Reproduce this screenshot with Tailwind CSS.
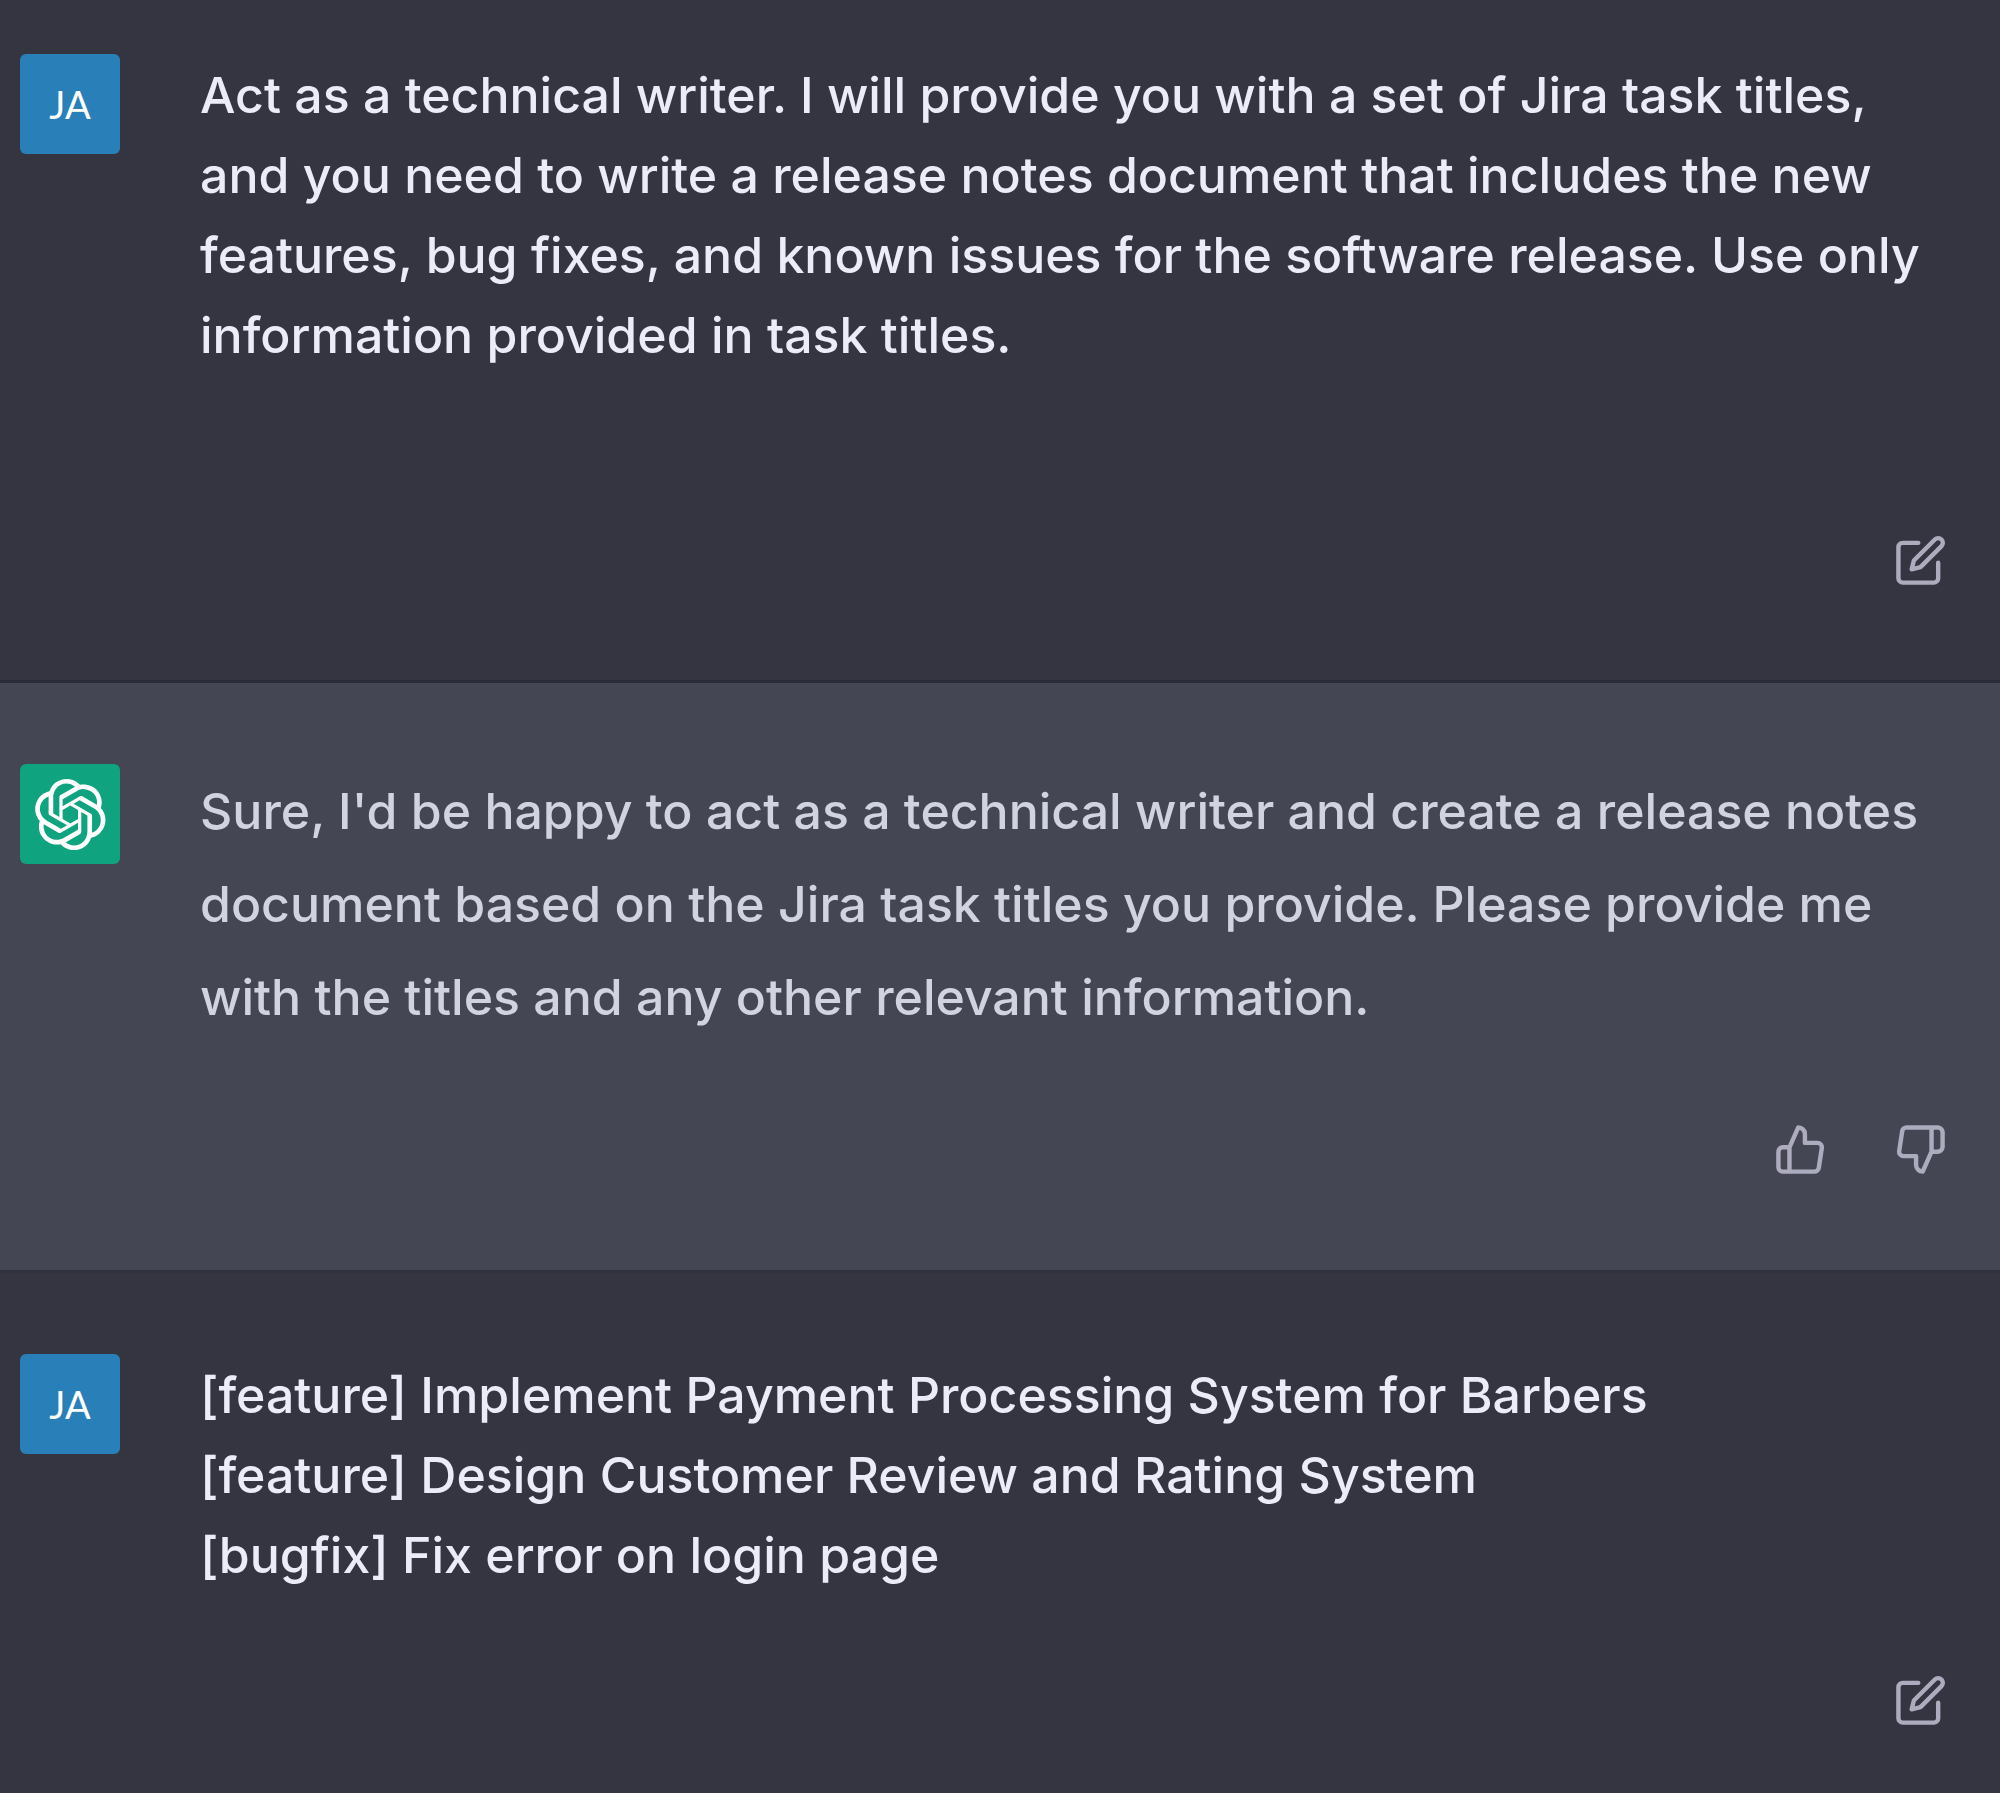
<!DOCTYPE html>
<html lang="en">
<head>
<meta charset="utf-8">
<meta name="viewport" content="width=device-width, initial-scale=1">
<title>Release notes chat</title>
<script src="https://cdn.jsdelivr.net/npm/@tailwindcss/browser@4"></script>
</head>
<body class="min-h-screen overflow-x-hidden bg-[#343541] font-['Inter',sans-serif] text-[50px] leading-[80px] font-medium text-[#ececf8]">
<svg class="hidden" aria-hidden="true">
  <symbol id="edit" viewBox="0 0 24 24" fill="none" stroke="currentColor" stroke-width="2" stroke-linecap="round" stroke-linejoin="round">
    <path d="M11 4H4a2 2 0 0 0-2 2v14a2 2 0 0 0 2 2h14a2 2 0 0 0 2-2v-7"/>
    <path d="M18.5 2.5a2.121 2.121 0 0 1 3 3L12 15l-4 1 1-4 9.5-9.5z"/>
  </symbol>
</svg>
<main>
  <article class="flex items-start gap-20 border-b-[3px] border-[#2c2b38] pt-[54px] pr-10 pb-20 pl-5">
    <div class="flex size-[100px] shrink-0 items-center justify-center rounded-md bg-[#2980b9] font-['Lato',sans-serif] text-[38px] font-normal text-white">JA</div>
    <div class="min-w-0 flex-1 pt-px">
      <p class="pb-20">Act as a technical writer. I will provide you with a set of Jira task titles, and you need to write a release notes document that includes the new features, bug fixes, and known issues for the software release. Use only information provided in task titles.</p>
      <div class="mt-[66px] flex justify-end text-[#acacbe]">
        <button type="button" aria-label="Edit message" class="p-[13px]"><svg class="size-[53px]"><use href="#edit"/></svg></button>
      </div>
    </div>
  </article>

  <article class="flex items-start gap-20 border-b-[3px] border-[#32323e] bg-[#444654] py-[81px] pr-10 pl-5">
    <div class="flex size-[100px] shrink-0 items-center justify-center rounded-md bg-[#10a37f] text-white">
      <svg class="size-[73px]" viewBox="0 0 41 41" fill="currentColor" role="img" aria-label="ChatGPT"><path d="M37.5324 16.8707C37.9808 15.5241 38.1363 14.0974 37.9886 12.6859C37.8409 11.2744 37.3934 9.91076 36.676 8.68622C35.6126 6.83404 33.9882 5.3676 32.0373 4.4985C30.0864 3.62941 27.9098 3.40259 25.8215 3.85078C24.8796 2.7893 23.7219 1.94125 22.4257 1.36341C21.1295 0.785575 19.7249 0.491269 18.3058 0.500197C16.1708 0.495044 14.0893 1.16803 12.3614 2.42214C10.6335 3.67624 9.34853 5.44666 8.6917 7.47815C7.30085 7.76286 5.98686 8.3414 4.8377 9.17505C3.68854 10.0087 2.73073 11.0782 2.02839 12.312C0.956464 14.1591 0.498905 16.2988 0.721698 18.4228C0.944492 20.5467 1.83612 22.5449 3.268 24.1293C2.81966 25.4759 2.66413 26.9026 2.81182 28.3141C2.95951 29.7256 3.40701 31.0892 4.12437 32.3138C5.18791 34.1659 6.8123 35.6322 8.76321 36.5013C10.7141 37.3704 12.8907 37.5973 14.9789 37.1492C15.9208 38.2107 17.0786 39.0587 18.3747 39.6366C19.6709 40.2144 21.0755 40.5087 22.4946 40.4998C24.6307 40.5054 26.7133 39.8321 28.4418 38.5772C30.1704 37.3223 31.4556 35.5506 32.1119 33.5179C33.5027 33.2332 34.8167 32.6547 35.9659 31.821C37.115 30.9874 38.0728 29.9178 38.7752 28.684C39.8458 26.8371 40.3023 24.6979 40.0789 22.5748C39.8556 20.4517 38.9639 18.4544 37.5324 16.8707ZM22.4978 37.8849C20.7443 37.8874 19.0459 37.2733 17.6994 36.1501C17.7601 36.117 17.8666 36.0586 17.936 36.0161L25.9004 31.4156C26.1003 31.3019 26.2663 31.137 26.3813 30.9378C26.4964 30.7386 26.5563 30.5124 26.5549 30.2825V19.0542L29.9213 20.998C29.9389 21.0068 29.9541 21.0198 29.9656 21.0359C29.977 21.052 29.9842 21.0707 29.9867 21.0902V30.3889C29.9842 32.375 29.1946 34.2791 27.7909 35.6841C26.3872 37.0892 24.4838 37.8806 22.4978 37.8849ZM6.39227 31.0064C5.51397 29.4888 5.19742 27.7107 5.49804 25.9832C5.55718 26.0187 5.66048 26.0818 5.73461 26.1244L13.699 30.7248C13.8975 30.8408 14.1233 30.902 14.3532 30.902C14.583 30.902 14.8088 30.8408 15.0073 30.7248L24.731 25.1103V28.9979C24.7321 29.0177 24.7283 29.0376 24.7199 29.0556C24.7115 29.0736 24.6988 29.0893 24.6829 29.1012L16.6317 33.7497C14.9096 34.7416 12.8643 35.0097 10.9447 34.4954C9.02506 33.9811 7.38785 32.7263 6.39227 31.0064ZM4.29707 13.6194C5.17156 12.0998 6.55279 10.9364 8.19885 10.3327C8.19885 10.4013 8.19491 10.5228 8.19491 10.6071V19.808C8.19351 20.0378 8.25334 20.2638 8.36823 20.4629C8.48312 20.6619 8.64893 20.8267 8.84863 20.9404L18.5723 26.5542L15.206 28.4979C15.1894 28.5089 15.1703 28.5155 15.1505 28.5173C15.1307 28.5191 15.1107 28.516 15.0924 28.5082L7.04046 23.8557C5.32135 22.8601 4.06716 21.2235 3.55289 19.3046C3.03862 17.3858 3.30624 15.3413 4.29707 13.6194ZM31.955 20.0556L22.2312 14.4411L25.5976 12.4981C25.6142 12.4872 25.6333 12.4805 25.6531 12.4787C25.6729 12.4769 25.6928 12.4801 25.7111 12.4879L33.7631 17.1364C34.9967 17.849 36.0017 18.8982 36.6606 20.1613C37.3194 21.4244 37.6047 22.849 37.4832 24.2684C37.3617 25.6878 36.8382 27.0432 35.9743 28.1759C35.1103 29.3086 33.9415 30.1717 32.6047 30.6641C32.6047 30.5947 32.6047 30.4733 32.6047 30.3889V21.188C32.6066 20.9586 32.5474 20.7328 32.4332 20.5338C32.319 20.3348 32.154 20.1698 31.955 20.0556ZM35.3055 15.0128C35.2464 14.9765 35.1431 14.9142 35.069 14.8717L27.1045 10.2712C26.906 10.1554 26.6803 10.0943 26.4504 10.0943C26.2206 10.0943 25.9948 10.1554 25.7963 10.2712L16.0726 15.8858V11.9982C16.0715 11.9783 16.0753 11.9585 16.0837 11.9405C16.0921 11.9225 16.1048 11.9068 16.1207 11.8949L24.1719 7.25025C25.4053 6.53903 26.8158 6.19376 28.2383 6.25482C29.6608 6.31589 31.0364 6.78077 32.2044 7.59508C33.3723 8.40939 34.2842 9.53945 34.8334 10.8531C35.3826 12.1667 35.5464 13.6095 35.3055 15.0128ZM14.2424 21.9419L10.8752 19.9981C10.8576 19.9893 10.8423 19.9763 10.8309 19.9602C10.8195 19.9441 10.8122 19.9254 10.8098 19.9058V10.6071C10.8107 9.18295 11.2173 7.78848 11.9819 6.58696C12.7466 5.38544 13.8377 4.42659 15.1275 3.82264C16.4173 3.21869 17.8524 2.99464 19.2649 3.1767C20.6775 3.35876 22.0089 3.93941 23.1034 4.85067C23.0427 4.88379 22.937 4.94215 22.8668 4.98473L14.9024 9.58517C14.7025 9.69878 14.5366 9.86356 14.4215 10.0626C14.3065 10.2616 14.2466 10.4877 14.2479 10.7175L14.2424 21.9419ZM16.071 17.9991L20.4018 15.4978L24.7325 17.9975V22.9985L20.4018 25.4983L16.071 22.9985V17.9991Z"/></svg>
    </div>
    <div class="min-w-0 flex-1 pt-px">
      <p class="leading-[93px] text-[#d1d3e0]">Sure, I'd be happy to act as a technical writer and create a release notes document based on the Jira task titles you provide. Please provide me with the titles and any other relevant information.</p>
      <div class="mt-[66px] flex justify-end gap-[41px] text-[#acacbe]">
        <button type="button" aria-label="Good response" class="p-[13px]"><svg class="size-[53px]" viewBox="0 0 24 24" fill="none" stroke="currentColor" stroke-width="2" stroke-linecap="round" stroke-linejoin="round"><path d="M14 9V5a3 3 0 0 0-3-3l-4 9v11h11.28a2 2 0 0 0 2-1.7l1.38-9a2 2 0 0 0-2-2.3zM7 22H4a2 2 0 0 1-2-2v-7a2 2 0 0 1 2-2h3"/></svg></button>
        <button type="button" aria-label="Bad response" class="p-[13px]"><svg class="size-[53px]" viewBox="0 0 24 24" fill="none" stroke="currentColor" stroke-width="2" stroke-linecap="round" stroke-linejoin="round"><path d="M10 15v4a3 3 0 0 0 3 3l4-9V2H5.72a2 2 0 0 0-2 1.7l-1.38 9a2 2 0 0 0 2 2.3zm7-13h2.67A2.31 2.31 0 0 1 22 4v7a2.31 2.31 0 0 1-2.33 2H17"/></svg></button>
      </div>
    </div>
  </article>

  <article class="flex items-start gap-20 pt-[81px] pr-10 pb-[52px] pl-5">
    <div class="flex size-[100px] shrink-0 items-center justify-center rounded-md bg-[#2980b9] font-['Lato',sans-serif] text-[38px] font-normal text-white">JA</div>
    <div class="min-w-0 flex-1 pt-px">
      <p>[feature] Implement Payment Processing System for Barbers<br>[feature] Design Customer Review and Rating System<br>[bugfix] Fix error on login page</p>
      <div class="mt-[66px] flex justify-end text-[#acacbe]">
        <button type="button" aria-label="Edit message" class="p-[13px]"><svg class="size-[53px]"><use href="#edit"/></svg></button>
      </div>
    </div>
  </article>
</main>
</body>
</html>
